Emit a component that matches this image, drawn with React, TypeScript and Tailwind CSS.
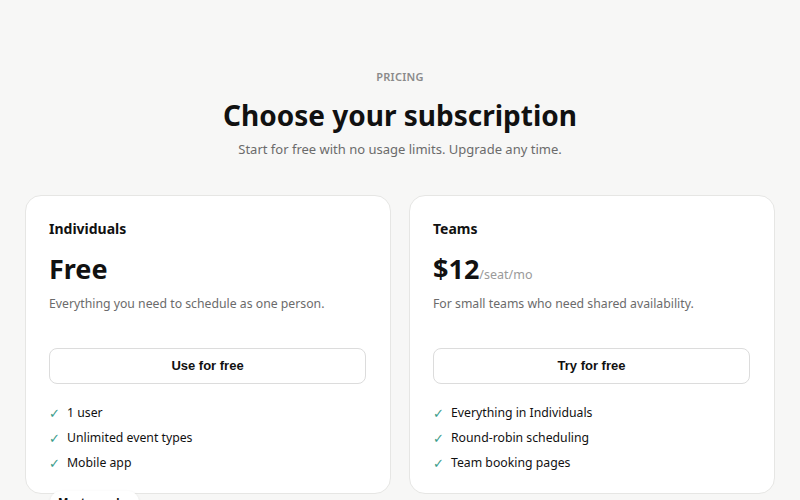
const plans = [
  {
    name: 'Individuals',
    price: 'Free',
    unit: '',
    blurb: 'Everything you need to schedule as one person.',
    cta: 'Use for free',
    features: ['1 user', 'Unlimited event types', 'Mobile app'],
  },
  {
    name: 'Teams',
    price: '$12',
    unit: '/seat/mo',
    blurb: 'For small teams who need shared availability.',
    cta: 'Try for free',
    features: ['Everything in Individuals', 'Round-robin scheduling', 'Team booking pages'],
  },
];

export default function App() {
  return (
    <div className="min-h-screen bg-[#f7f7f6] font-['Noto_Sans',sans-serif] text-[#111]">
      <div className="mx-auto max-w-[800px] px-[25px] pt-[69px] pb-16">
        {/* Header */}
        <div className="text-center">
          <p className="text-[11px] leading-4 font-semibold uppercase tracking-wide text-[#8a8a8a]">Pricing</p>
          <h1 className="mt-[12px] text-[28px] leading-9 font-bold">Choose your subscription</h1>
          <p className="mt-[6px] text-[13px] leading-5 text-[#6b6b6b]">Start for free with no usage limits. Upgrade any time.</p>
        </div>

        {/* Plans */}
        <div className="mt-[36px] grid grid-cols-2 gap-[18px]">
          {plans.map((plan) => (
            <div key={plan.name} className="rounded-2xl border border-[#e6e6e4] bg-white pl-[23px] pr-6 pt-[23px] pb-[21px]">
              <h2 className="text-[14px] leading-5 font-bold">{plan.name}</h2>
              <div className="mt-[14px] flex h-8 items-baseline">
                <span className="text-[27px] leading-8 font-bold">{plan.price}</span>
                {plan.unit && <span className="text-[12.5px] text-[#9a9a9a]">{plan.unit}</span>}
              </div>
              <p className="mt-[10px] text-[12.25px] leading-[18px] text-[#6b6b6b]">{plan.blurb}</p>
              <button className="mt-[35px] h-[36px] w-full rounded-lg border border-[#dcdcdc] bg-white font-['Liberation_Sans',Arial,sans-serif] text-[13px] font-bold text-[#111]">
                {plan.cta}
              </button>
              <ul className="mt-[20px] space-y-[7px] text-[12.25px]">
                {plan.features.map((f) => (
                  <li key={f} className="flex items-center gap-[7px] leading-[18px]">
                    <span className="text-[13px] text-[#3a9c8a]">✓</span>
                    {f}
                  </li>
                ))}
              </ul>
            </div>
          ))}
          <div className="relative rounded-2xl border border-[#e6e6e4] bg-white pl-[23px] pr-6 pt-[23px] pb-[21px]">
            <span className="absolute -top-[22px] left-6 rounded-full bg-white px-[8px] py-[3px] text-[11px] leading-4 font-bold shadow-sm">
              Most popular
            </span>
            <h2 className="text-[14px] leading-5 font-bold">Enterprise</h2>
          </div>
        </div>
      </div>
    </div>
  );
}
